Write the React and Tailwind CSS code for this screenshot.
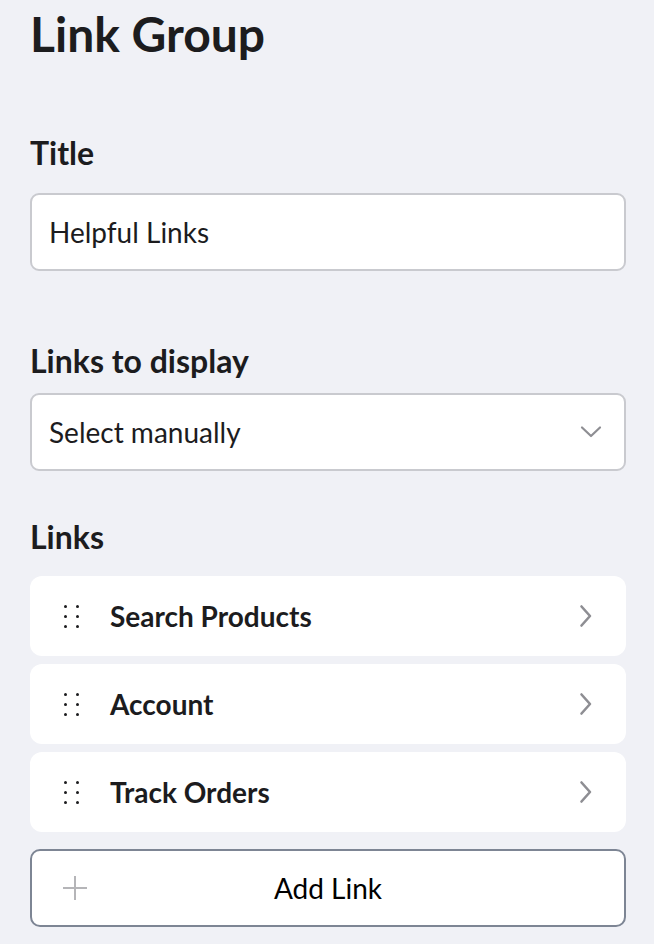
import React from 'react';

const links = ['Search Products', 'Account', 'Track Orders'];

const DragHandle = () => (
  <div className="grid grid-cols-2 gap-x-[9px] gap-y-[7px] w-[15px]">
    {Array.from({ length: 6 }).map((_, i) => (
      <span key={i} className="w-[3px] h-[3px] rounded-full bg-[#1c1c1e]" />
    ))}
  </div>
);

const ChevronRight = () => (
  <svg width="14" height="24" viewBox="0 0 14 24" fill="none">
    <path d="M2.5 2.5 L11 12 L2.5 21.5" stroke="#8e8e93" strokeWidth="2.6" strokeLinecap="round" strokeLinejoin="round" />
  </svg>
);

const ChevronDown = () => (
  <svg width="22" height="14" viewBox="0 0 22 14" fill="none">
    <path d="M2 2.5 L11 11 L20 2.5" stroke="#8e8e93" strokeWidth="2.2" strokeLinecap="round" strokeLinejoin="round" />
  </svg>
);

const LinkRow = ({ label }) => (
  <div className="h-[80px] bg-white rounded-[12px] flex items-center pl-[34px] pr-[33px]">
    <DragHandle />
    <span className="ml-[31px] flex-1 text-[28px] font-bold text-[#1c1c1e]">{label}</span>
    <ChevronRight />
  </div>
);

export default function App() {
  return (
    <div className="min-h-[944px] bg-[#f0f1f6] pl-[30px] pr-[28px] pt-[5px] text-[#1c1c1e]" style={{ fontFamily: 'Lato, "Noto Sans", sans-serif' }}>
      <h1 className="text-[48px] leading-[58px] font-bold">Link Group</h1>

      <label className="block mt-[71px] text-[32px] leading-[38px] font-bold">Title</label>
      <div className="mt-[21px] h-[78px] bg-white border-2 border-[#c9cacf] rounded-[9px] flex items-center px-[17px]">
        <span className="text-[28px]">Helpful Links</span>
      </div>

      <label className="block mt-[71px] text-[32px] leading-[38px] font-bold">Links to display</label>
      <div className="mt-[13px] h-[78px] bg-white border-2 border-[#c9cacf] rounded-[9px] flex items-center justify-between pl-[17px] pr-[22px]">
        <span className="text-[28px]">Select manually</span>
        <ChevronDown />
      </div>

      <h2 className="mt-[47px] text-[32px] leading-[38px] font-bold">Links</h2>
      <div className="mt-[20px] flex flex-col gap-[8px]">
        {links.map((l) => (
          <LinkRow key={l} label={l} />
        ))}
      </div>

      <button className="mt-[17px] w-full h-[78px] bg-white border-2 border-[#7d8594] rounded-[10px] relative flex items-center justify-center">
        <svg className="absolute left-[30px] top-1/2 -translate-y-1/2" width="26" height="26" viewBox="0 0 26 26" fill="none">
          <path d="M13 1 V25 M1 13 H25" stroke="#b5b5b8" strokeWidth="2" />
        </svg>
        <span className="text-[28px] text-black">Add Link</span>
      </button>
    </div>
  );
}
